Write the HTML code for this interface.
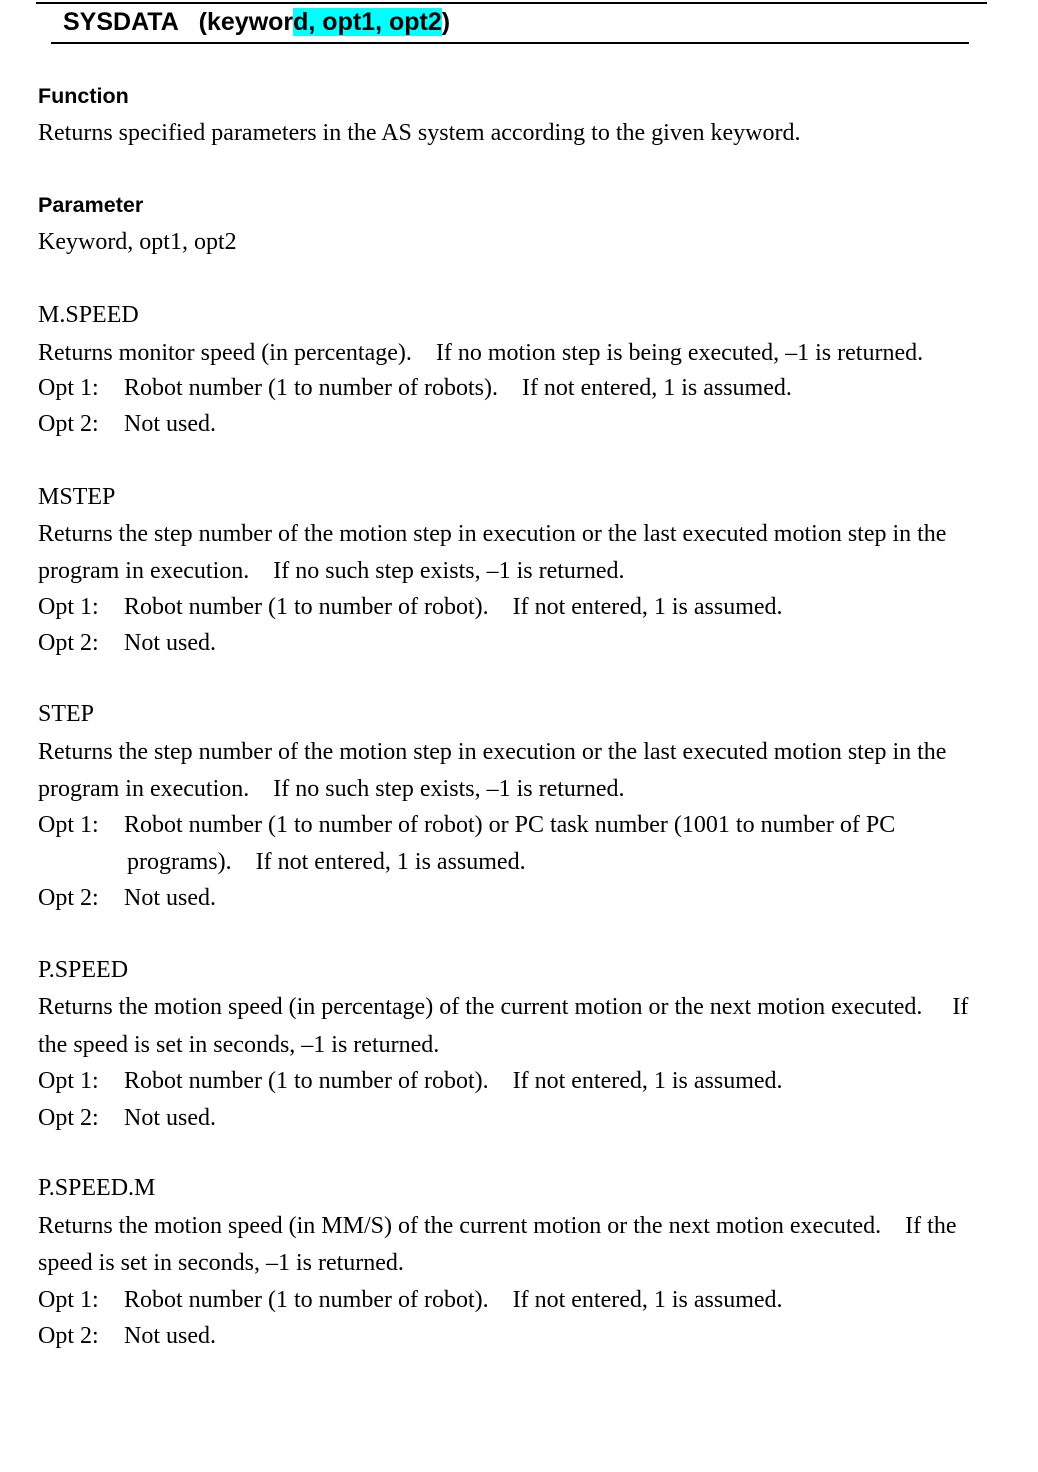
<!DOCTYPE html>
<html><head><meta charset="utf-8"><style>
body{margin:0;width:1038px;height:1472px;background:#fff;position:relative;font-family:"Liberation Serif",serif;font-size:24px;color:#000;overflow:hidden}
.l{position:absolute;left:38px;line-height:28px;white-space:pre;}
.h{font-family:"Liberation Sans",sans-serif;font-weight:bold;font-size:21.5px}
.t{position:absolute;left:86px}
</style></head><body>
<div style="position:absolute;left:36px;top:2px;width:951px;height:2px;background:#000"></div>
<div style="position:absolute;left:51px;top:42px;width:918px;height:2px;background:#000"></div>
<div style="position:absolute;left:63px;top:7px;line-height:31px;font-family:'Liberation Sans',sans-serif;font-weight:bold;font-size:25px;white-space:pre;">SYSDATA   (keywor<span style="background:#00ffff">d, opt1, opt2</span>)</div>

<div class="l h" style="top:82px">Function</div>
<div class="l" style="top:119px">Returns specified parameters in the AS system according to the given keyword.</div>
<div class="l h" style="top:191px">Parameter</div>
<div class="l" style="top:228px">Keyword, opt1, opt2</div>

<div class="l" style="top:301px">M.SPEED</div>
<div class="l" style="top:339px">Returns monitor speed (in percentage).    If no motion step is being executed, –1 is returned.</div>
<div class="l" style="top:374px">Opt 1:<span class="t">Robot number (1 to number of robots).    If not entered, 1 is assumed.</span></div>
<div class="l" style="top:410px">Opt 2:<span class="t">Not used.</span></div>

<div class="l" style="top:483px">MSTEP</div>
<div class="l" style="top:520px">Returns the step number of the motion step in execution or the last executed motion step in the</div>
<div class="l" style="top:557px">program in execution.    If no such step exists, –1 is returned.</div>
<div class="l" style="top:593px">Opt 1:<span class="t">Robot number (1 to number of robot).    If not entered, 1 is assumed.</span></div>
<div class="l" style="top:629px">Opt 2:<span class="t">Not used.</span></div>

<div class="l" style="top:700px">STEP</div>
<div class="l" style="top:738px">Returns the step number of the motion step in execution or the last executed motion step in the</div>
<div class="l" style="top:775px">program in execution.    If no such step exists, –1 is returned.</div>
<div class="l" style="top:811px">Opt 1:<span class="t">Robot number (1 to number of robot) or PC task number (1001 to number of PC</span></div>
<div class="l" style="top:848px;left:127px">programs).    If not entered, 1 is assumed.</div>
<div class="l" style="top:884px">Opt 2:<span class="t">Not used.</span></div>

<div class="l" style="top:956px">P.SPEED</div>
<div class="l" style="top:993px">Returns the motion speed (in percentage) of the current motion or the next motion executed.     If</div>
<div class="l" style="top:1031px">the speed is set in seconds, –1 is returned.</div>
<div class="l" style="top:1067px">Opt 1:<span class="t">Robot number (1 to number of robot).    If not entered, 1 is assumed.</span></div>
<div class="l" style="top:1104px">Opt 2:<span class="t">Not used.</span></div>

<div class="l" style="top:1174px">P.SPEED.M</div>
<div class="l" style="top:1212px">Returns the motion speed (in MM/S) of the current motion or the next motion executed.    If the</div>
<div class="l" style="top:1249px">speed is set in seconds, –1 is returned.</div>
<div class="l" style="top:1286px">Opt 1:<span class="t">Robot number (1 to number of robot).    If not entered, 1 is assumed.</span></div>
<div class="l" style="top:1322px">Opt 2:<span class="t">Not used.</span></div>
</body></html>
